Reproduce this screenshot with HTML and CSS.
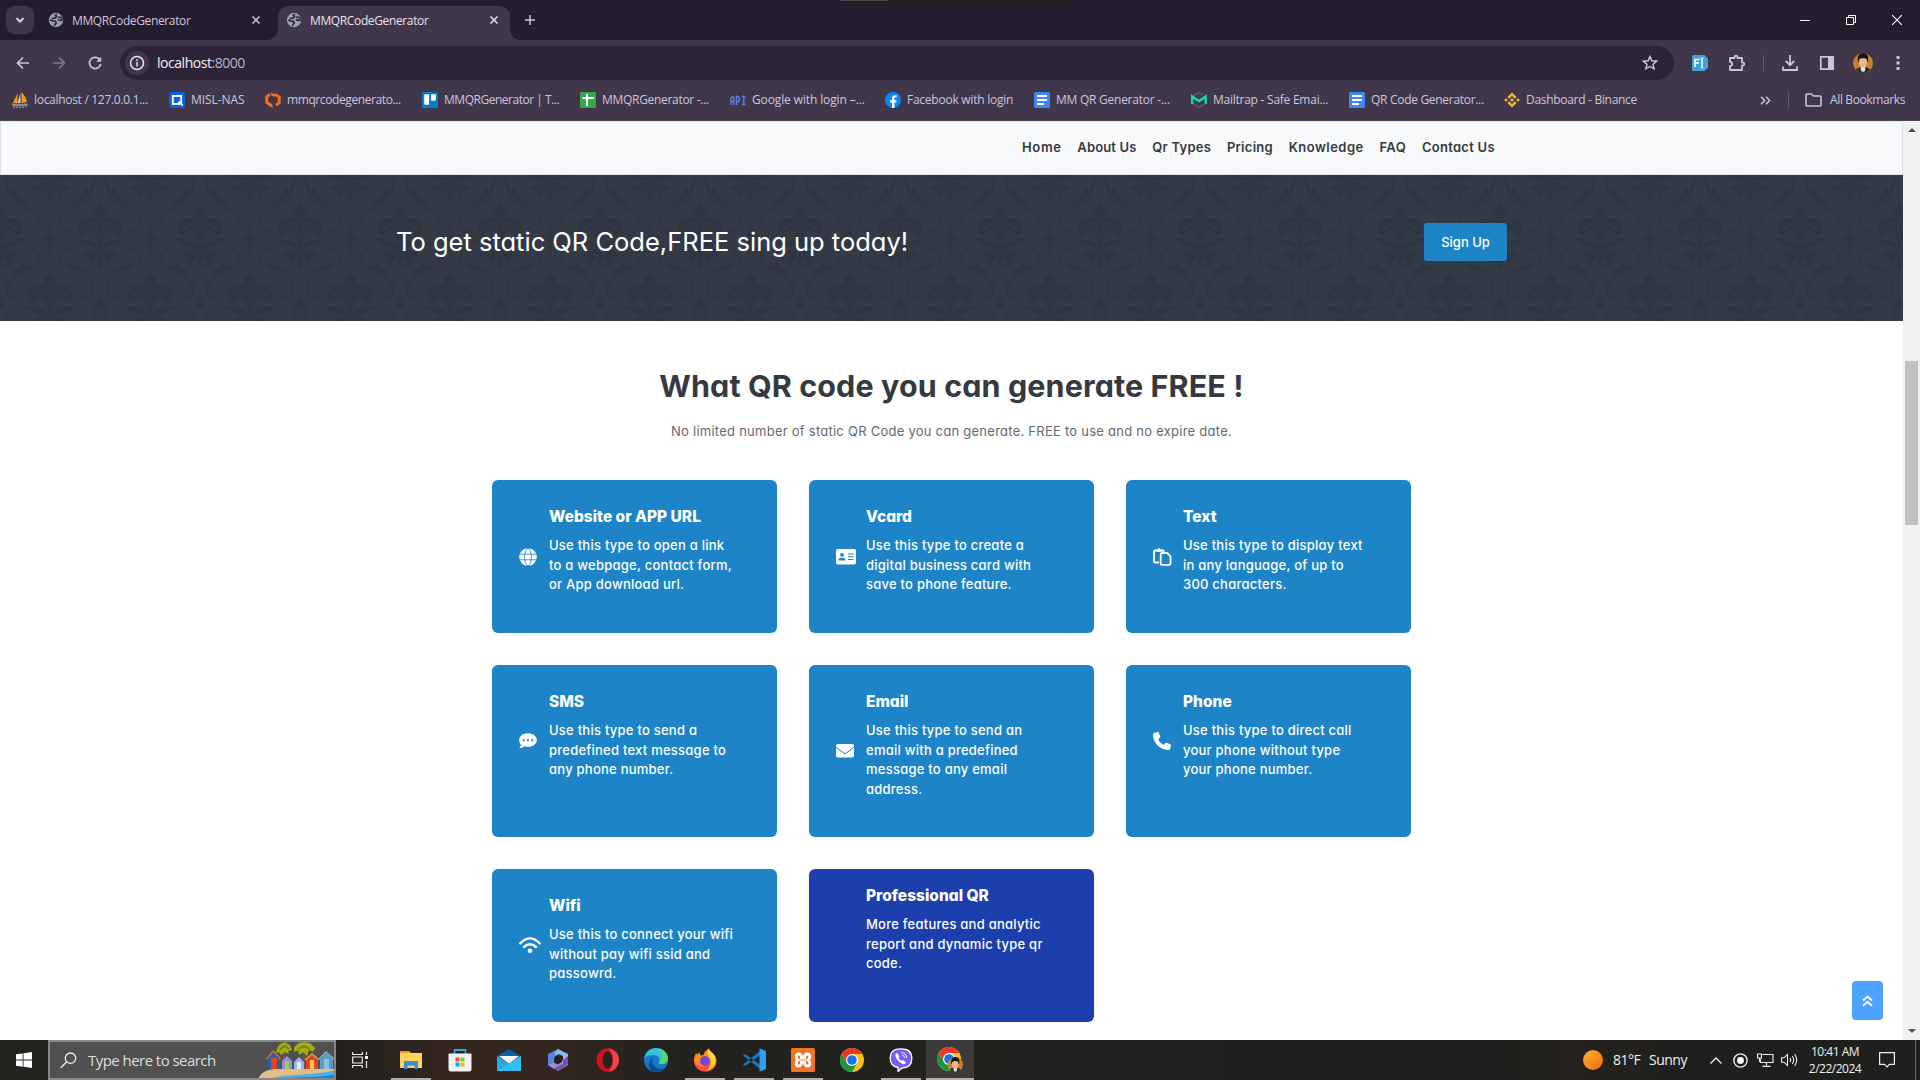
FILE: index.html
```html
<!DOCTYPE html>
<html lang="en">
<head>
<meta charset="utf-8">
<title>MMQRCodeGenerator</title>
<link rel="stylesheet" href="styles.css">
</head>
<body>
<svg class="defs" width="0" height="0" aria-hidden="true">
  <defs>
    <symbol id="globe-tab" viewBox="0 0 16 16"><circle cx="8" cy="8" r="7.200" fill="#9aa0a6"/><path d="M8.800 2 7.400 3.400l1.200 1.400-2 1.400-2.800.2M2 8l2.800.9 2.600.3.800 1.900-1.300 1.200-.2 1.600M10.200 5l3.200.6.600 2.600-2.600.2-1.400-1.200" fill="none" stroke="#33283f" stroke-width="1.700"/></symbol>
    <symbol id="x" viewBox="0 0 10 10"><path d="M1.500 1.500l7 7M8.500 1.500l-7 7" stroke="currentColor" stroke-width="1.500" fill="none"/></symbol>
    <symbol id="doc" viewBox="0 0 16 16"><rect width="16" height="16" rx="1.500" fill="#4285f4"/><path d="M3 4h10M3 8h10M3 12h7" stroke="#fff" stroke-width="1.800"/></symbol>
    <symbol id="chrome" viewBox="0 0 24 24"><circle cx="12" cy="12" r="12" fill="#fbc116"/><path d="M12 6H22.400A12 12 0 0 0 1.600 6L6.800 15z" fill="#e33b2e"/><path d="M1.600 6A12 12 0 0 0 12 24l5.200-9H6.800z" fill="#229342"/><circle cx="12" cy="12" r="6" fill="#fff"/><circle cx="12" cy="12" r="4.800" fill="#1a73e8"/></symbol>
    <symbol id="face" viewBox="0 0 20 20"><clipPath id="fc"><circle cx="10" cy="10" r="10"/></clipPath><g clip-path="url(#fc)"><rect width="20" height="20" fill="#c5822c"/><path d="M2 20c0-5 4-6 8-6s8 1 8 6z" fill="#2a2f3b"/><path d="M7.500 13h5l-.5 5-2 1-2-1z" fill="#e8ddd3"/><path d="M5 9C4 2 6.500 0 10.200 0S16 2 15 9z" fill="#1b1614"/><ellipse cx="10" cy="9" rx="4.200" ry="5.500" fill="#eab694"/><path d="M5.800 6.500C6 3 8 2.500 10 2.500s4.200.5 4.300 4C12 4.800 8 4.800 5.800 6.500z" fill="#1b1614"/></g></symbol>
    <g id="motif">
      <path d="M0 0l3 6 5-1-3 6 4 2-6 2H-3l-6-2 4-2-3-6 5 1z"/>
      <path d="M0 17c8-4 16-3 21 3 4 6 1 12-5 14-2-7-6-9-9-5-3 3-4 6-4 9h-6c0-3-1-6-4-9-3-4-7-2-9 5-6-2-9-8-5-14 5-6 13-7 21-3z"/>
      <path d="M0 45c-4-6-4-12 0-18 4 6 4 12 0 18zM0 45c8 0 20-2 27-10-7 1-19 0-27 10zM0 45c-8 0-20-2-27-10 7 1 19 0 27 10zM0 46c6-1 15 1 20 8-8 1-15 0-20-8zM0 46c-6-1-15 1-20 8 8 1 15 0 20-8zM0 48c4 4 4 14 0 19-4-5-4-15 0-19zM3 49c7 2 9 7 8 12-5-2-8-6-8-12zM-3 49c-7 2-9 7-8 12 5-2 8-6 8-12z"/>
      <path d="M-18 16c-9 5-12 14-9 20M18 16c9 5 12 14 9 20M-18 57c5 5 12 7 18 7s13-2 18-7" class="vine thin"/>
      <path d="M-12 22c2-5 9-3 9 4M12 22c-2-5-9-3-9 4M-19 27c3-5 8-2 6 3M19 27c-3-5-8-2-6 3" class="gap"/>
    </g>
    <g id="scroll">
      <path d="M6 1C5 24 22 32 32 36s11 16 3 21c-4 1-7-2-5-5M33 70c-5-1-3 6 0 5 9 2 10 13-3 19S5 104 7 116c2 8 12 9 13 4 0-3-4-4-5-1" class="vine"/>
      <path d="M7 8c2 12 10 20 22 23l-3-6-4 1-2-7-4 1-1-7-4 2zM9 110c0-9 9-15 24-17l-4-5-3 3-5-2-2 5-5 0-1 6z"/>
    </g>
    <pattern id="damask" width="100" height="134" patternUnits="userSpaceOnUse">
      <g class="damask">
        <use href="#motif" y="28"/><use href="#motif" x="100" y="28"/>
        <use href="#motif" x="50" y="95"/><use href="#motif" x="50" y="-39"/>
        <use href="#scroll"/><use href="#scroll" transform="matrix(-1 0 0 1 100 0)"/>
        <path d="M50 51l2 8 5 4-5 4-2 10-2-10-5-4 5-4zM0 118l2 8 5 4-5 4H0zM100 118l-2 8-5 4 5 4h2z"/>
        <path d="M50 44c0 10 4 15 10 19-6 5-10 10-10 20 0-10-4-15-10-20 6-4 10-9 10-19" class="vine thin"/>
      </g>
    </pattern>
  </defs>
</svg>

<header class="browser">
  <div class="tabs">
    <span class="tab-menu"><svg width="10" height="10" viewBox="0 0 10 10"><path d="M1.500 3.200 5 6.700l3.500-3.500" fill="none" stroke="currentColor" stroke-width="1.800"/></svg></span>
    <div class="tab"><svg width="16" height="16"><use href="#globe-tab"/></svg><span class="tab-title">MMQRCodeGenerator</span><svg width="10" height="10"><use href="#x"/></svg></div>
    <div class="tab active"><svg width="16" height="16"><use href="#globe-tab"/></svg><span class="tab-title">MMQRCodeGenerator</span><svg width="10" height="10"><use href="#x"/></svg></div>
    <svg class="new-tab" width="12" height="12" viewBox="0 0 12 12"><path d="M6 1v10M1 6h10" stroke="currentColor" stroke-width="1.500"/></svg>
    <div class="win-buttons">
      <svg width="10" height="10" viewBox="0 0 10 10"><path d="M0 5.500h10" stroke="#fff"/></svg>
      <svg width="10" height="10" viewBox="0 0 10 10"><path d="M.5 2.500h7v7h-7zM2.500 2.500v-2h7v7h-2" stroke="#fff" fill="none"/></svg>
      <svg width="10" height="10" viewBox="0 0 10 10"><path d="M0 0l10 10M10 0 0 10" stroke="#fff" fill="none" stroke-width="1.100"/></svg>
    </div>
  </div>
  <div class="toolbar">
    <div class="nav-buttons">
      <svg width="14" height="14" viewBox="0 0 14 14"><path d="M13 7H2M7 1.500 1.500 7 7 12.500" stroke="currentColor" stroke-width="1.700" fill="none"/></svg>
      <svg class="dim" width="14" height="14" viewBox="0 0 14 14"><path d="M1 7h11M7 1.500 12.500 7 7 12.500" stroke="currentColor" stroke-width="1.700" fill="none"/></svg>
      <svg width="14" height="14" viewBox="0 0 14 14"><path d="M12 4.200A5.600 5.600 0 1 0 12.600 8" stroke="currentColor" stroke-width="1.700" fill="none"/><path d="M13.200.8v5H8.200z" fill="currentColor"/></svg>
    </div>
    <div class="omnibox">
      <span class="info"><svg width="16" height="16" viewBox="0 0 16 16"><circle cx="8" cy="8" r="6.500" fill="none" stroke="#e6e0ec" stroke-width="1.500"/><path d="M8 7v4.500M8 4.300v1.600" stroke="#e6e0ec" stroke-width="1.500"/></svg></span>
      <span class="url">localhost<span class="port">:8000</span></span>
      <svg class="star" width="16" height="16" viewBox="0 0 16 16"><path d="M8 1.500l1.900 4.300 4.700.4-3.600 3.100 1.100 4.600L8 11.500l-4.100 2.400L5 9.300 1.400 6.200l4.700-.4z" fill="none" stroke="#cfc8d8" stroke-width="1.400"/></svg>
    </div>
    <div class="actions">
      <svg class="ext-f" width="17" height="16" viewBox="0 0 17 16"><path d="M1.500 0h11l3.500 3.500v9L12.500 16h-11Q0 16 0 14.500v-13Q0 0 1.500 0z" fill="#3ea2e0"/><path d="M3 12V4.500h4.500M3 8h4" stroke="#fff" stroke-width="1.700" fill="none"/><path d="M8.500 3q1.500 0 1.500 1v8q0 1-1.500 1M11.500 3Q10 3 10 4v8q0 1 1.500 1" stroke="#fff" fill="none"/></svg>
      <svg class="ext-p" width="18" height="18" viewBox="0 0 18 18"><path d="M2 4h4.500c-.4-3 3.400-3 3 0H14v4.500c3-.4 3 3.400 0 3V16H2v-4c3 .2 3-4.200 0-4z" fill="none" stroke="currentColor" stroke-width="1.800" stroke-linejoin="round"/></svg>
      <i class="divider"></i>
      <svg class="dl" width="16" height="16" viewBox="0 0 16 16"><path d="M8 0v10M3.800 6 8 10.200 12.200 6M1 11.500V15h14v-3.500" fill="none" stroke="currentColor" stroke-width="1.800"/></svg>
      <svg class="panel" width="16" height="16" viewBox="0 0 16 16"><path d="M1.800 1.800h12.400v12.400H1.800z" fill="none" stroke="currentColor" stroke-width="1.700"/><path d="M9 2h5v12H9z" fill="currentColor"/></svg>
      <svg class="avatar" width="20" height="20"><use href="#face"/></svg>
      <svg class="kebab" width="4" height="14" viewBox="0 0 4 14"><path d="M.5 0h3v3h-3zM.5 5.500h3v3h-3zM.5 11h3v3h-3z" fill="currentColor"/></svg>
    </div>
  </div>
  <div class="bookmarks">
    <div class="bm"><svg width="16" height="16" viewBox="0 0 16 16"><path d="M5.500 1.500V11H.8zM9.500 0c3 3 5 7 5.500 10l-5.500 1z" fill="#f89c0e"/><path d="M8.500 1v10H5.500z" fill="#c9c9c9"/><path d="M0 12h16l-1 2H1zM1 15.500h13" fill="#8a8496" stroke="#a19bac" stroke-width=".8" stroke-dasharray="2 1"/></svg><span>localhost / 127.0.0.1...</span></div>
    <div class="bm"><svg width="16" height="16" viewBox="0 0 16 16"><rect width="16" height="16" rx="2" fill="#0b63d6"/><path d="M11 12H3.800V4h8.400v8l1.500 1.500M9.500 9.500l2 2" stroke="#fff" stroke-width="1.800" fill="none"/></svg><span>MISL-NAS</span></div>
    <div class="bm"><svg width="16" height="16" viewBox="0 0 16 16"><path d="M5 2.500 1.800 4.500v6L6 13.500M9.500 2.200l4.700 2.600v6L11 13.200" stroke="#ff6c17" stroke-width="2.800" fill="none"/><path d="M6 .2l5 3-2 1.800-3-2zM5 11l2.500 1.500V16L4 13.500z" fill="#ff6c17"/></svg><span>mmqrcodegenerato...</span></div>
    <div class="bm"><svg width="16" height="16" viewBox="0 0 16 16"><rect width="16" height="16" rx="1.500" fill="#0a7cc4"/><rect x="2.200" y="2.200" width="4.900" height="10.600" rx="1" fill="#fff"/><rect x="9" y="2.200" width="4.900" height="6.600" rx="1" fill="#fff"/></svg><span>MMQRGenerator | T...</span></div>
    <div class="bm"><svg width="16" height="16" viewBox="0 0 16 16"><rect width="16" height="16" rx="1.500" fill="#34a853"/><path d="M2.500 6h11.500M7 2v12" stroke="#fff" stroke-width="2"/></svg><span>MMQRGenerator -...</span></div>
    <div class="bm"><svg width="16" height="16" viewBox="0 0 16 16"><path d="M1 13V6l1.500-1.500L4 6v7M1 9.500h3M6.500 13V4.500H8.500L9.500 6v2l-1 1.500h-2M12 4.500h3.500M12 12.500h3.500M13.800 4.500v8" stroke="#5b80e0" stroke-width="1.400" fill="none"/></svg><span>Google with login –...</span></div>
    <div class="bm"><svg width="16" height="16" viewBox="0 0 16 16"><circle cx="8" cy="8" r="8" fill="#0d86f5"/><path d="M7 16v-5.500H5V8.200h2V6.500C7 4.300 8.200 3.200 10.100 3.200l1.600.1v2h-1.100c-1 0-1.200.5-1.200 1.200v1.700h2.200l-.4 2.300H9.400V16z" fill="#fff"/></svg><span>Facebook with login</span></div>
    <div class="bm"><svg width="16" height="16"><use href="#doc"/></svg><span>MM QR Generator -...</span></div>
    <div class="bm"><svg width="16" height="16" viewBox="0 0 16 16"><path d="M1.500 6 4 2.500 8 .8l4 1.700M2 12l6 3.200L14 12" fill="none" stroke="#4b5b74" stroke-width="1.600"/><path d="M1.200 12V4.500L8 9l6.800-4.500V12" fill="none" stroke="#12e0a0" stroke-width="2.300"/></svg><span>Mailtrap - Safe Emai...</span></div>
    <div class="bm"><svg width="16" height="16"><use href="#doc"/></svg><span>QR Code Generator...</span></div>
    <div class="bm"><svg width="16" height="16" viewBox="0 0 16 16"><path d="M4.300 5.800 8 2.100l3.700 3.700M4.300 10.200 8 13.900l3.700-3.700" fill="none" stroke="#f3ba2f" stroke-width="2.400"/><path d="M8 6l2 2-2 2-2-2zM2 6.200 3.800 8 2 9.800.2 8zM14 6.200 15.800 8 14 9.800 12.200 8z" fill="#f3ba2f"/></svg><span>Dashboard - Binance</span></div>
    <div class="bm-end">
      <svg width="11" height="9" viewBox="0 0 11 9"><path d="M1 .8l3.700 3.700L1 8.200M6 .8l3.700 3.700L6 8.200" fill="none" stroke="currentColor" stroke-width="1.500"/></svg>
      <i class="divider"></i>
      <svg width="17" height="14" viewBox="0 0 17 14"><path d="M1 2q0-1 1-1h4.500l2 2H15q1 0 1 1v8q0 1-1 1H2q-1 0-1-1z" fill="none" stroke="currentColor" stroke-width="1.600"/></svg>
      <span>All Bookmarks</span>
    </div>
  </div>
</header>

<div class="viewport">
  <main class="page">
    <nav class="site-nav">
      <a>Home</a><a>About Us</a><a>Qr Types</a><a>Pricing</a><a>Knowledge</a><a>FAQ</a><a>Contact Us</a>
    </nav>
    <section class="hero">
      <svg class="hero-bg" width="1903" height="146" aria-hidden="true"><rect width="1903" height="146" fill="url(#damask)"/></svg>
      <div class="hero-row">
        <h2>To get static QR Code,FREE sing up today!</h2>
        <button class="btn">Sign Up</button>
      </div>
    </section>
    <section class="types">
      <h1>What QR code you can generate FREE !</h1>
      <p class="lead">No limited number of static QR Code you can generate. FREE to use and no expire date.</p>
      <div class="grid">
        <article class="card"><div class="media"><svg width="18" height="18" viewBox="0 0 18 18"><circle cx="9" cy="9" r="8.800" fill="#fff"/><path d="M0 6.200h18M0 11.800h18M9 0C4.500 3 4.500 15 9 18M9 0c4.500 3 4.500 15 0 18" fill="none" stroke="#1d84c7" stroke-width=".8"/></svg><div class="body"><h3>Website or APP URL</h3><p>Use this type to open a link<br>to a webpage, contact form,<br>or App download url.</p></div></div></article>
        <article class="card"><div class="media"><svg width="20" height="16" viewBox="0 0 20 16"><rect width="20" height="15.500" rx="1.800" fill="#fff"/><circle cx="6" cy="5.800" r="1.900" fill="#1d84c7"/><path d="M2.500 11.500q0-2.800 2.500-2.800h2q2.500 0 2.500 2.800zM12 4.500h5.500v1H12zM12 7.200h5.500v1H12zM12 9.900h5.500v1H12z" fill="#1d84c7"/></svg><div class="body"><h3>Vcard</h3><p>Use this type to create a<br>digital business card with<br>save to phone feature.</p></div></div></article>
        <article class="card"><div class="media"><svg width="19" height="18" viewBox="0 0 19 18"><path d="M6 14.500H2.300Q1 14.500 1 13.200V3.700q0-1.300 1.300-1.300h7.400q1.300 0 1.300 1.300" fill="none" stroke="#fff" stroke-width="1.800"/><path d="M3 1.500h1.500q1.500-3 3 0H9V4H3z" fill="#fff"/><path d="M9 5h5.200l3.300 3.300v7.200q0 1.300-1.300 1.300H9q-1.300 0-1.300-1.300V6.300Q7.700 5 9 5z" fill="none" stroke="#fff" stroke-width="1.800"/></svg><div class="body"><h3>Text</h3><p>Use this type to display text<br>in any language, of up to<br>300 characters.</p></div></div></article>
        <article class="card"><div class="media"><svg class="raised" width="18" height="16" viewBox="0 0 18 16"><path d="M9 .3c5 0 8.900 3 8.900 6.800S14 13.900 9 13.900c-1.300 0-2.500-.2-3.600-.6C4 14.400 2.300 15.200.3 15.200c1-1.200 1.600-2.300 1.700-3.400C.8 10.500.1 8.900.1 7.100.1 3.300 4 .3 9 .3z" fill="#fff"/><path d="M3.800 6.300h1.900v1.900H3.800zM8 6.300h1.900v1.900H8zM12.200 6.300h1.900v1.900h-1.900z" fill="#1d84c7"/></svg><div class="body"><h3>SMS</h3><p>Use this type to send a<br>predefined text message to<br>any phone number.</p></div></div></article>
        <article class="card"><div class="media"><svg class="raised" width="18" height="14" viewBox="0 0 18 14"><rect width="18" height="13.500" rx="1.800" fill="#fff"/><path d="M0 3l7.500 6q1.500 1 3 0L18 3" fill="none" stroke="#1d84c7"/></svg><div class="body"><h3>Email</h3><p>Use this type to send an<br>email with a predefined<br>message to any email<br>address.</p></div></div></article>
        <article class="card"><div class="media"><svg class="raised" width="18" height="18" viewBox="0 0 512 512"><path d="M164.900 24.600c-7.700-18.600-28-28.500-47.400-23.200l-88 24C12.100 30.200 0 46 0 64c0 247.400 200.600 448 448 448 18 0 33.800-12.100 38.600-29.500l24-88c5.300-19.400-4.600-39.700-23.200-47.400l-96-40c-16.300-6.800-35.200-2.100-46.300 11.600L304.700 368C234.300 334.700 177.300 277.700 144 207.300L193.300 167c13.700-11.200 18.400-30 11.600-46.300z" fill="#fff"/></svg><div class="body"><h3>Phone</h3><p>Use this type to direct call<br>your phone without type<br>your phone number.</p></div></div></article>
        <article class="card"><div class="media"><svg class="raised" width="22" height="17" viewBox="0 0 22 17"><path d="M1.300 6.300Q11-3.500 20.700 6.300M5 10q6-5.600 12 0" fill="none" stroke="#fff" stroke-width="2.400" stroke-linecap="round"/><circle cx="11" cy="13.800" r="2.300" fill="#fff"/></svg><div class="body"><h3>Wifi</h3><p>Use this to connect your wifi<br>without pay wifi ssid and<br>passowrd.</p></div></div></article>
        <article class="card pro"><div class="media"><div class="body"><h3>Professional QR</h3><p>More features and analytic<br>report and dynamic type qr<br>code.</p></div></div></article>
      </div>
    </section>
    <a class="to-top"><svg width="11" height="12" viewBox="0 0 11 12"><path d="M1 5.500l4.500-4 4.500 4M1 10.800l4.500-4 4.500 4" fill="none" stroke="#fff" stroke-width="1.900"/></svg></a>
  </main>
  <div class="scrollbar"><i class="arrow up"></i><i class="thumb"></i><i class="arrow down"></i></div>
</div>

<footer class="taskbar">
  <div class="start"><svg width="16" height="16" viewBox="0 0 16 16"><path d="M0 2.300 6.700 1.400v6.200H0zM7.500 1.200 16 0v7.600H7.500zM0 8.400h6.700v6.300L0 13.700zM7.500 8.400H16V16l-8.500-1.200z" fill="#fff"/></svg></div>
  <div class="search">
    <svg width="17" height="17" viewBox="0 0 17 17"><circle cx="10.500" cy="6.200" r="5.200" fill="none" stroke="#eee" stroke-width="1.300"/><path d="M6.500 10 .8 15.800" stroke="#eee" stroke-width="1.300"/></svg>
    <span>Type here to search</span>
    <svg class="beach" width="78" height="38" viewBox="0 0 78 38">
      <path d="M0 38C3 29 10 27 20 27h58v11z" fill="#e2bd85"/><path d="M10 38c10-7 40-3 68-10v10z" fill="#45b4ec"/><path d="M18 38c20-5 40-1 60-6v6z" fill="#1b86d8"/>
      <path d="M26 7v19M46 6v20" stroke="#7b5a2e" stroke-width="1.600"/>
      <path d="M19 6l3-4 5-2 5 3 2 5-4 1 1 3-4-2-4 3-2-3-3 1zM36 5l5-4 5-1 6 1 5 5-2 4-4-2-2 6-4-4-4 3-1-5-4 2z" fill="#a3ab14"/><path d="M22 7l5-3 4 3M40 7l6-3 6 3" stroke="#6d7d0e" stroke-width="1.500" fill="none"/>
      <path d="M10 16l5.500-6 6.500 6v11H10z" fill="#1d64ad"/><path d="M13 16h6v11h-6z" fill="#e5411b"/><path d="M8.500 17l7-8 7 8" stroke="#dd6b2a" stroke-width="1.500" fill="none"/>
      <path d="M24 19l5-5 5 5v8H24z" fill="#9a8bd0"/><path d="M27 19h4v8h-4z" fill="#9ccf4b"/>
      <path d="M36 20l5-5 5 5v7H36z" fill="#90b4e8"/><path d="M39 20h4v7h-4z" fill="#e4eaf6"/>
      <path d="M48 18l6-5 6 5v9H48z" fill="#e04232"/><path d="M52 18h4v9h-4z" fill="#f6c53c"/><path d="M47 18l7-6 7 6" stroke="#f0a02c" stroke-width="1.500" fill="none"/>
      <path d="M62 17l6-6 7 6v10H62z" fill="#5b9bc7"/><path d="M66 17h5v10h-5z" fill="#8fc1df"/><path d="M61 17l7-7 8 7" stroke="#7fa7bf" stroke-width="1.500" fill="none"/>
    </svg>
  </div>
  <div class="task-view"><svg width="16" height="16" viewBox="0 0 16 16"><path d="M.7 0v2.500h9.600V0M.7 16v-2.500h9.600V16M.7 5h9.600v6H.7zM14.500 0v3M14.500 9v7" fill="none" stroke="#eee" stroke-width="1.200"/><path d="M13 4h3v3h-3z" fill="#fff"/></svg></div>
  <div class="apps">
    <div class="app open"><svg width="22" height="20" viewBox="0 0 22 20"><path d="M0 1h9l2 2H0z" fill="#e29a17"/><path d="M0 3h22v15H0z" fill="#fbd35e"/><path d="M4 19v-8h14v8h-3.500v-3.500h-7V19z" fill="#3b8dd4"/></svg></div>
    <div class="app"><svg width="24" height="24" viewBox="0 0 24 24"><path d="M6.500 6V2h11v4" fill="none" stroke="#2aa5e2" stroke-width="1.800"/><path d="M.5 5.500h23V21q0 2.500-2.500 2.500H3Q.5 23.500.5 21z" fill="#f2f2f2"/><path d="M7.500 9.500h4v4h-4z" fill="#f1511b"/><path d="M12.500 9.500h4v4h-4z" fill="#80cc28"/><path d="M7.500 14.500h4v4h-4z" fill="#00adef"/><path d="M12.500 14.500h4v4h-4z" fill="#fbbc09"/></svg></div>
    <div class="app"><svg width="24" height="24" viewBox="0 0 24 24"><path d="M0 8l12-7 12 7v4H0z" fill="#0a5ea8"/><path d="M2 8h20l-10 8z" fill="#f3f3f3"/><path d="M0 8l12 8 12-8v15H0z" fill="#2ba7e8"/><path d="M0 23l24-15v15z" fill="#35bdf2"/></svg></div>
    <div class="app"><svg width="22" height="24" viewBox="0 0 22 24"><path d="M11 1 1 6v11l6 4v-9l1-4 4-2V1z" fill="#5a86de"/><path d="M11 1l10 5v9l-5-3V8l-5-2-3 2V4z" fill="#8ab8f2"/><path d="M1 17l10 6 10-6v-3l-5-2-5 4-4-1z" fill="#a78ad6"/><path d="M16 12l5-4v8l-10 7-4-3 9-4z" fill="#6d55b8"/><path d="M11 8l4 2v4l-4 2.500L7.500 14v-4z" fill="#25221f"/></svg></div>
    <div class="app"><svg width="24" height="24" viewBox="0 0 24 24"><ellipse cx="12.500" cy="12" rx="11" ry="11.500" fill="#d3101e"/><path d="M13 .5a11 11.500 0 0 1 0 23c3-1 5-6 5-11.500S16 2 13 .5z" fill="#f04350"/><ellipse cx="12.500" cy="12" rx="5" ry="8.500" fill="#252321"/></svg></div>
    <div class="app"><svg width="24" height="24" viewBox="0 0 24 24"><circle cx="12" cy="12" r="12" fill="#1579c9"/><path d="M.3 10C1.500 3.500 6.500 0 12 0c7 0 12 5 12 10 0 4-3 6-6.500 6-2.500 0-3-1-2.500-2 2-4-1-7-5.500-7C5 7 2 8 .3 10z" fill="#35c1d8"/><path d="M17 1.200c4 2 7 5.500 7 9 0 4-3 6-6.500 6-2.500 0-3-1-2.500-2 2.500-1 4-7 2-13z" fill="#57d66b"/><path d="M9 9c-2 5 0 11 7 12 2 0 4-.5 6-2-3 4-8 5.500-12 4.800C4 22 3 13 9 9z" fill="#0c4c96"/></svg></div>
    <div class="app open"><svg width="24" height="24" viewBox="0 0 24 24"><path d="M12.500 23.500C5.500 23.500 1 18.500 1 12.500 1 9 2.500 6 3.500 5l.5 2C5 5 6 5 6.500 4.500l1 3 3-.5C12 2 15 1.500 16 .5c0 3 2 4 3 6 .5-1 .5-1.500.5-2C22 7 23.500 10 23.500 13c0 6-5 10.500-11 10.500z" fill="#ff8b1f"/><path d="M16 .5c0 3 7 5 6.500 12-.5 5-4 8-8 9 4-4 5-8 2-12-2-2-3-5-.5-9z" fill="#ffd83d"/><circle cx="12" cy="13" r="5" fill="#7b45d6"/><path d="M1 12c2 6 7 8 12 6 3-1 4-3 4-5 1 5-2 10-7 10-5-1-8-5-9-11z" fill="#ff4a4e"/></svg></div>
    <div class="app open"><svg width="24" height="24" viewBox="0 0 24 24"><path d="M18 3 1 16.500 3 18 18 7.500zM18 21 1 7.500 3 6l15 10.500z" fill="#1478bd"/><path d="M17.500.3 24 3v18l-6.500 2.700z" fill="#2aa3ef"/></svg></div>
    <div class="app open"><svg width="24" height="24" viewBox="0 0 24 24"><rect width="24" height="24" rx="1.500" fill="#ee7523"/><path d="M7.500 6c-3 0-3 4.500-.5 6-2.500 1.500-2.500 6 .5 6s3-3 3-4h3c0 1 0 4 3 4s3-4.500.5-6c2.500-1.500 2.500-6-.5-6s-3 3-3 4h-3c0-1 0-4-3-4z" fill="none" stroke="#fff" stroke-width="2.800"/></svg></div>
    <div class="app"><svg width="24" height="24"><use href="#chrome"/></svg></div>
    <div class="app open"><svg width="24" height="24" viewBox="0 0 24 24"><path d="M12 .8c7 0 10.800 2.500 10.800 9.700S19 20 13 20l-4 3.500V19.500C3.500 18.500 1.200 16 1.200 10.500 1.200 3.300 5 .8 12 .8z" fill="#7360f2" stroke="#fff" stroke-width="1.300"/><path d="M8 5c-2 1-2 2.500-1 4.500 1.500 3 3.500 5 6.500 6.500 1.500.6 2.800 0 3.500-1.500l-3-2.500-1.500 1c-1.500-.7-2.500-2-3-3.500l1-1.200z" fill="#fff"/><path d="M12.500 4.500c3 .3 5 2 5 5.500M12.800 7c1.500.2 2.400 1 2.500 2.700" fill="none" stroke="#fff"/></svg></div>
    <div class="app open current"><svg width="26" height="26" viewBox="0 0 26 26"><use href="#chrome" width="24" height="24"/><use href="#face" x="10.500" y="10" width="15.500" height="15.500"/></svg></div>
  </div>
  <div class="tray">
    <i class="sun"></i>
    <span class="temp">81°F</span><span class="sunny">Sunny</span>
    <svg class="caret" width="12" height="7" viewBox="0 0 12 7"><path d="M.5 6.500 6 1l5.500 5.500" fill="none" stroke="#eee" stroke-width="1.300"/></svg>
    <svg class="rec" width="15" height="15" viewBox="0 0 15 15"><circle cx="7.500" cy="7.500" r="6.600" fill="none" stroke="#eee" stroke-width="1.400"/><circle cx="7.500" cy="7.500" r="3.400" fill="#fff"/></svg>
    <svg class="net" width="17" height="14" viewBox="0 0 17 14"><path d="M5.500 1.500H16v8H3.500V6M9.500 9.500v4M5.500 13.400h8M.5 1h4v4h-4zM2.500 5v4" fill="none" stroke="#eee" stroke-width="1.100"/></svg>
    <svg class="vol" width="17" height="14" viewBox="0 0 17 14"><path d="M.6 4.800H3L6.500 1.500v11L3 9.200H.6z" fill="none" stroke="#eee" stroke-width="1.100"/><path d="M9 5q1.300 2 0 4M11.300 3q2.800 4 0 8M13.600 1q4.200 6 0 12" fill="none" stroke="#eee" stroke-width="1.100"/></svg>
    <div class="clock"><span>10:41 AM</span><span>2/22/2024</span></div>
    <svg class="notif" width="16" height="16" viewBox="0 0 16 16"><path d="M.6.600h14.800v11.800H10.500L8 15 5.500 12.400H.6z" fill="none" stroke="#eee" stroke-width="1.200"/></svg>
    <i class="peek"></i>
  </div>
</footer>
</body>
</html>
```
FILE: styles.css
```css
* { box-sizing: border-box; }
body {
  margin: 0;
  width: 1920px;
  height: 1080px;
  overflow: hidden;
  display: flex;
  flex-direction: column;
  font-family: Inter, "Open Sans", sans-serif;
  background: #fff;
}
svg { display: block; flex: none; }
.defs { position: absolute; }

/* Browser chrome */
.browser {
  height: 121px;
  flex: none;
  background: #40374b;
  border-bottom: 1px solid #4e4a55;
  color: #cdc4dc;
  font: 12px/16px "Open Sans", "Noto Sans", sans-serif;
  letter-spacing: -0.3px;
}
.tabs {
  height: 40px; display: flex; align-items: flex-end;
  background: linear-gradient(90deg, #4b4947 48px, #20201f 48px) 840px 0 / 240px 1px no-repeat #241d2e;
}
.tab-menu {
  width: 28px; height: 28px; margin: 0 12px 6px 6px; border-radius: 9px;
  background: #40374b; display: grid; place-items: center; color: #e6e0ec;
}
.tab { width: 232px; height: 34px; padding: 0 17px 6px 2px; display: flex; align-items: center; letter-spacing: -0.37px; }
.tab-title { flex: 1; margin-left: 8px; padding-top: 2px; }
.tab.active {
  color: #e6e0ec; background: #40374b; border-radius: 10px 10px 0 0; position: relative;
  padding-left: 8px; padding-right: 11px;
}
.tab.active::before, .tab.active::after { content: ""; position: absolute; bottom: 0; width: 10px; height: 10px; }
.tab.active::before { left: -10px; background: radial-gradient(circle at 0 0, transparent 9.5px, #40374b 10px); }
.tab.active::after { right: -10px; background: radial-gradient(circle at 100% 0, transparent 9.5px, #40374b 10px); }
.new-tab { margin: 0 0 14px 14px; }
.win-buttons { margin-left: auto; display: flex; gap: 36px; padding: 0 18px 15px 0; }
.toolbar { height: 46px; padding-top: 6px; display: flex; }
.nav-buttons { width: 120px; height: 34px; display: flex; align-items: center; gap: 22px; padding-left: 16px; }
.dim { opacity: .45; }
.omnibox {
  width: 1554px; height: 34px; border-radius: 17px; background: #2c2436;
  display: flex; align-items: center; padding: 0 16px 0 5px; color: #f1ecf6; font-size: 14px;
  letter-spacing: -0.47px;
}
.info { width: 24px; height: 24px; border-radius: 50%; background: #40374b; display: grid; place-items: center; }
.url { margin-left: 8px; }
.port { color: #b9b1c4; }
.star { margin-left: auto; }
.actions { height: 34px; display: flex; align-items: center; }
.ext-f { margin-left: 18px; }
.ext-p { margin-left: 19px; }
.divider { width: 1px; height: 16px; background: #62586e; }
.actions .divider { margin: 0 18px 0 17px; }
.panel { margin-left: 21px; }
.avatar { margin-left: 18px; }
.kebab { margin-left: 23px; }
.bookmarks { height: 28px; display: flex; align-items: center; padding-left: 12px; }
.bm { display: flex; align-items: center; gap: 6px; width: 157px; white-space: nowrap; }
.bm:nth-child(2) { width: 96px; letter-spacing: -0.06px; }
.bm:nth-child(3) { letter-spacing: -0.4px; }
.bm:nth-child(4), .bm:nth-child(9) { width: 158px; }
.bm:nth-child(4) { letter-spacing: -0.48px; }
.bm:nth-child(5) { width: 150px; }
.bm:nth-child(6), .bm:nth-child(10) { width: 155px; }
.bm:nth-child(6) { letter-spacing: -0.12px; }
.bm:nth-child(7) { width: 149px; }
.bm:nth-child(7), .bm:nth-child(8), .bm:nth-child(9) { letter-spacing: -0.25px; }
.bm-end { margin-left: auto; display: flex; align-items: center; padding-right: 15px; letter-spacing: -0.37px; }
.bm-end .divider { margin: 0 16px 0 17px; }
.bm-end span { width: 75px; margin-left: 8px; white-space: nowrap; }

/* Web page */
.viewport { height: 919px; flex: none; display: flex; }
.page { width: 1903px; position: relative; font-feature-settings: "cv11"; }
.site-nav {
  height: 54px; background: #f8f9fa; border: 1px solid #dee2e6;
  display: flex; align-items: center; gap: 15.7px; padding: 0 0 2px 1021px;
  color: #343a40; font-size: 13px; font-weight: 600; letter-spacing: 0.27px;
}
.site-nav a:nth-child(1) { letter-spacing: 0.65px; }
.site-nav a:nth-child(2) { letter-spacing: 0.15px; }
.site-nav a:nth-child(5), .site-nav a:nth-child(6) { letter-spacing: 0.48px; }
.hero { height: 146px; background: #343a46; position: relative; }
.hero-bg { position: absolute; left: 0; top: 0; }
.damask { fill: #2f3541; }
.vine { fill: none; stroke: #2f3541; stroke-width: 1.8; }
.thin { stroke-width: 1; }
.gap { fill: none; stroke: #343a46; stroke-width: 1.2; }
.hero-row {
  position: relative; width: 1111px; margin-left: 396px; padding-top: 48px;
  display: flex; justify-content: space-between; align-items: flex-start;
}
.hero h2 { margin: 0; color: #fff; font-size: 25.5px; line-height: 37px; font-weight: 400; white-space: nowrap; }
.btn {
  width: 83px; height: 38px; border: 0; border-radius: 3px; background: #1d84c7; color: #fff;
  font: 500 13px/18px Inter, sans-serif; font-feature-settings: inherit; padding: 0;
}
.types { padding-top: 45px; text-align: center; }
.types h1 {
  margin: 0; font-size: 30.5px; line-height: 40px; font-weight: 700; letter-spacing: 0.1px;
  color: #343a40; white-space: nowrap;
}
.lead { margin: 15px 0 0; font-size: 13px; line-height: 20px; letter-spacing: 0.25px; color: #666a6e; white-space: nowrap; }
.grid {
  display: grid; grid-template-columns: repeat(3, 285px); grid-template-rows: 153px 172px 153px;
  gap: 32px; margin: 39px 0 0 492px; text-align: left; color: #fff;
}
.card { background: #1d84c7; border-radius: 6px; padding: 24px 20px 0 27px; }
.media { display: flex; align-items: center; }
.media > svg { margin-right: -22px; }
.media > .raised { margin-bottom: 2px; }
.body { margin-left: auto; width: 208px; }
.body h3 { margin: 0 0 7px; padding-top: 1px; font-size: 15.5px; line-height: 24px; font-weight: 800; white-space: nowrap; }
.body p {
  margin: 0 0 16px; font-size: 13px; line-height: 19.5px; font-weight: 500;
  letter-spacing: 0.24px; white-space: nowrap;
}
.card.pro { background: #1c3fad; padding-top: 14px; }
.to-top {
  position: absolute; left: 1852px; top: 860px; width: 31px; height: 39px; border-radius: 4px;
  background: #4da3ff; display: grid; place-items: center;
}
.scrollbar { width: 17px; background: #f1f1f1; display: flex; flex-direction: column; align-items: center; }
.arrow { border: 4px solid transparent; width: 0; height: 0; }
.arrow.up { border-bottom-color: #505050; border-top: 0; margin-top: 7px; }
.arrow.down { border-top-color: #505050; border-bottom: 0; margin: auto 0 7px; }
.thumb { width: 13px; height: 164px; margin-top: 229px; background: #c1c1c1; }

/* Windows taskbar */
.taskbar {
  height: 40px; flex: none; display: flex; color: #f0f0f0;
  font: 15px/20px "Open Sans", "Noto Sans", sans-serif;
  background: linear-gradient(90deg, #24231f 0, #22211f 330px, #33261d 450px, #33261e 540px, #24221f 680px, #1f1f1e 1500px, #26231d 1570px, #1f1f1e 1680px, #1f1f1e);
}
.start { width: 48px; display: grid; place-items: center; }
.search {
  width: 288px; border: 2px solid #888; background: #505050; display: flex; align-items: center;
  padding-left: 10px; color: #ddd; overflow: hidden; letter-spacing: -0.55px;
}
.search span { margin-left: 11px; white-space: nowrap; }
.beach { margin: 0 -2px -2px auto; }
.task-view { width: 48px; display: grid; place-items: center; }
.apps { display: flex; gap: 1px; margin-left: 3px; }
.app { width: 48px; display: grid; place-items: center; border-bottom: 2px solid transparent; padding-top: 1px; }
.app.open { background: linear-gradient(#b0adaa, #b0adaa) 50% 100% / 40px 2px no-repeat border-box; }
.app.current { background: #3d3b39; border-bottom-color: #b0adaa; }
.tray { margin-left: auto; display: flex; align-items: center; letter-spacing: -0.5px; }
.sun { width: 20px; height: 20px; border-radius: 50%; background: linear-gradient(135deg, #f6b62c, #f2660f); }
.temp { margin-left: 10px; width: 36px; font-size: 14px; }
.sunny { width: 61px; font-size: 14px; white-space: nowrap; }
.rec { margin-left: 11px; }
.net { margin-left: 9px; }
.vol { margin-left: 7px; }
.clock {
  width: 70px; margin-left: 2px; display: flex; flex-direction: column; align-items: center;
  font-size: 12px; line-height: 17.5px; white-space: nowrap;
}
.notif { margin-left: 9px; }
.peek { width: 1px; height: 40px; margin: 0 4px 0 20px; background: #6a6a68; }
```
